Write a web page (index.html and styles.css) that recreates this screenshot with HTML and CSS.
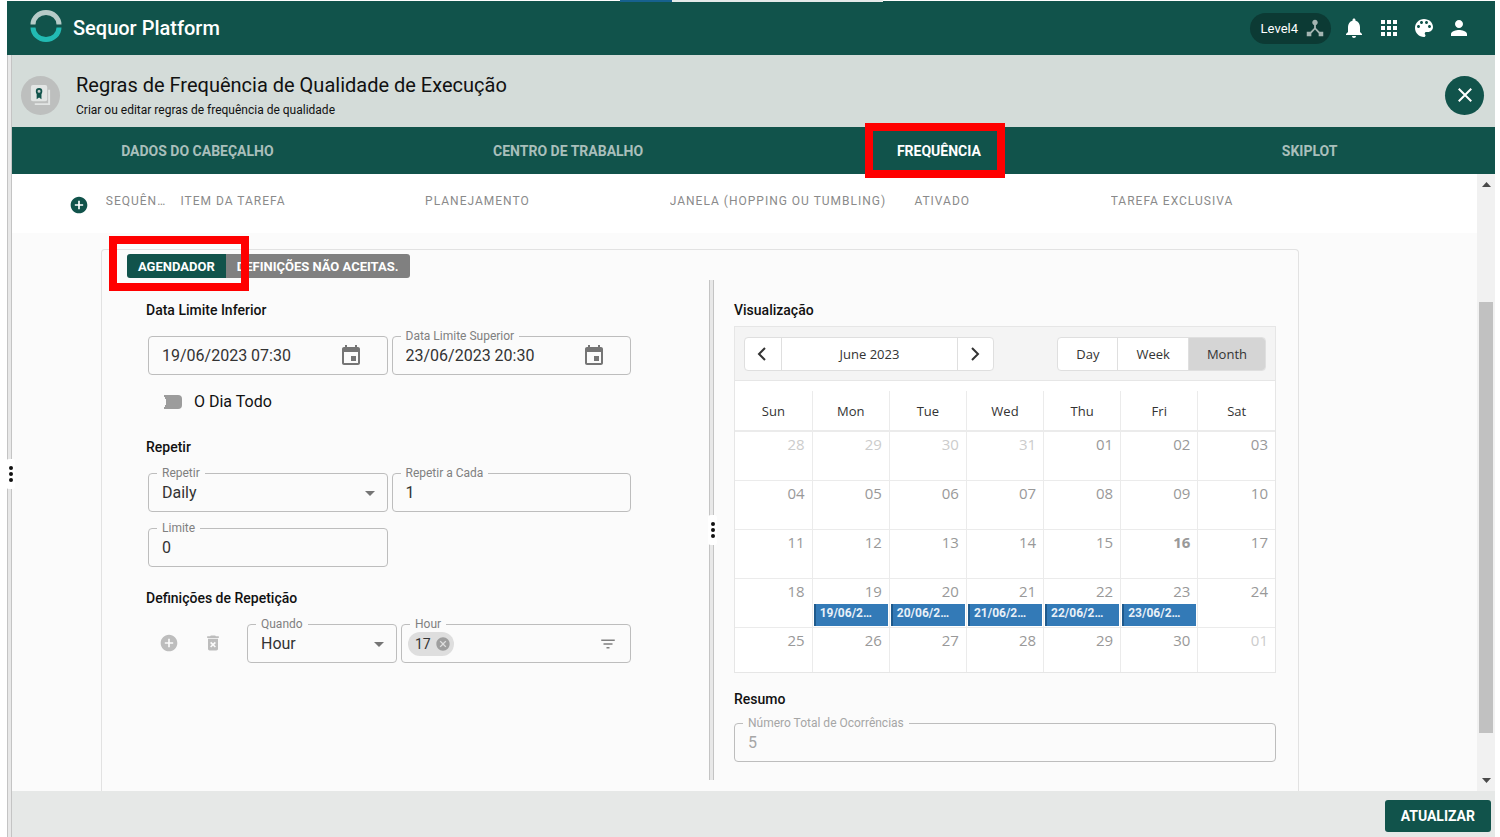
FILE: index.html
```html
<!DOCTYPE html>
<html lang="pt-BR">
<head>
  <meta charset="UTF-8" />
  <meta name="viewport" content="width=device-width, initial-scale=1.0" />
  <title>Sequor Platform – Regras de Frequência</title>
  <link rel="stylesheet" href="styles.css">
</head>
<body>
  <div class="top-strip"></div>

  <header class="app-bar">
    <svg class="logo" viewBox="0 0 32 32" aria-hidden="true">
      <path d="M3 14.5a13 12 0 0 1 26 0" fill="none" stroke="#b7cbc8" stroke-width="5"/>
      <path d="M3 17.5a13 12 0 0 0 26 0" fill="none" stroke="#22bab3" stroke-width="5"/>
    </svg>
    <span class="brand">Sequor Platform</span>
    <button class="level-button">Level4
      <svg viewBox="0 0 24 24"><path d="M17 16l-4-4V8.82C14.16 8.4 15 7.3 15 6c0-1.66-1.34-3-3-3S9 4.34 9 6c0 1.3.84 2.4 2 2.82V12l-4 4H3v5h5v-3.05l4-4.2 4 4.2V21h5v-5h-4z"/></svg>
    </button>
    <button class="icon-button" aria-label="Notificações">
      <svg viewBox="0 0 24 24"><path d="M12 22c1.1 0 2-.9 2-2h-4c0 1.1.89 2 2 2zm6-6v-5c0-3.07-1.64-5.64-4.5-6.32V4c0-.83-.67-1.5-1.5-1.5s-1.5.67-1.5 1.5v.68C7.63 5.36 6 7.92 6 11v5l-2 2v1h16v-1l-2-2z"/></svg>
    </button>
    <button class="icon-button" aria-label="Aplicativos">
      <svg viewBox="0 0 24 24"><path d="M4 8h4V4H4v4zm6 12h4v-4h-4v4zm-6 0h4v-4H4v4zm0-6h4v-4H4v4zm6 0h4v-4h-4v4zm6-10v4h4V4h-4zm-6 4h4V4h-4v4zm6 6h4v-4h-4v4zm0 6h4v-4h-4v4z"/></svg>
    </button>
    <button class="icon-button" aria-label="Tema">
      <svg viewBox="0 0 24 24"><path d="M12 3c-4.97 0-9 4.03-9 9s4.03 9 9 9c.83 0 1.5-.67 1.5-1.5 0-.39-.15-.74-.39-1.01-.23-.26-.38-.61-.38-.99 0-.83.67-1.5 1.5-1.5H16c2.76 0 5-2.24 5-5 0-4.42-4.03-8-9-8zm-5.5 9c-.83 0-1.5-.67-1.5-1.5S5.67 9 6.5 9 8 9.67 8 10.5 7.33 12 6.5 12zm3-4C8.67 8 8 7.33 8 6.5S8.67 5 9.5 5s1.5.67 1.5 1.5S10.330 8 9.5 8zm5 0c-.83 0-1.5-.67-1.5-1.5S13.670 5 14.5 5s1.5.67 1.5 1.5S15.330 8 14.5 8zm3 4c-.83 0-1.5-.67-1.5-1.5S16.670 9 17.5 9s1.5.67 1.5 1.5-.67 1.5-1.5 1.5z"/></svg>
    </button>
    <button class="icon-button" aria-label="Usuário">
      <svg viewBox="0 0 24 24"><path d="M12 12c2.21 0 4-1.79 4-4s-1.79-4-4-4-4 1.79-4 4 1.79 4 4 4zm0 2c-2.67 0-8 1.34-8 4v2h16v-2c0-2.66-5.33-4-8-4z"/></svg>
    </button>
  </header>

  <div class="workspace">
    <div class="splitter side-splitter"><span class="handle"><i></i><i></i><i></i></span></div>

    <main class="page">
      <div class="page-title">
        <span class="page-icon">
          <svg viewBox="0 0 24 24" aria-hidden="true">
            <path d="M21 6v15H6" fill="none" stroke="#e2e5e4" stroke-width="2"/>
            <rect x="2" y="1" width="17" height="17" rx="2" fill="#e2e5e4"/>
            <path d="M8 9h5v7l-2.500-2-2.500 2z" fill="#11534b"/>
            <circle cx="10.500" cy="7.500" r="2.500" fill="#c4c9c8" stroke="#11534b" stroke-width="1.800"/>
          </svg>
        </span>
        <div class="page-heading">
          <h1>Regras de Frequência de Qualidade de Execução</h1>
          <p>Criar ou editar regras de frequência de qualidade</p>
        </div>
        <button class="close-button" aria-label="Fechar">
          <svg viewBox="0 0 24 24"><path d="M4.500 4.500l15 15M19.500 4.500l-15 15" fill="none" stroke="#fff" stroke-width="2.400"/></svg>
        </button>
      </div>

      <nav class="tabs">
        <a href="#cabecalho">DADOS DO CABEÇALHO</a>
        <a href="#centro">CENTRO DE TRABALHO</a>
        <a href="#frequencia" class="active">FREQUÊNCIA<span class="marker tab-marker"></span></a>
        <a href="#skiplot">SKIPLOT</a>
      </nav>

      <div class="body-row">
        <div class="content">
          <table class="rules">
            <colgroup>
              <col class="col-add"><col class="col-seq"><col class="col-wide"><col class="col-wide"><col class="col-wide"><col class="col-active"><col>
            </colgroup>
            <thead>
              <tr>
                <th class="add-cell">
                  <button class="add-button" aria-label="Adicionar">
                    <svg viewBox="0 0 24 24"><path d="M12 2C6.48 2 2 6.48 2 12s4.48 10 10 10 10-4.480 10-10S17.520 2 12 2zm5 11h-4v4h-2v-4H7v-2h4V7h2v4h4v2z"/></svg>
                  </button>
                </th>
                <th>SEQUÊNCIA</th>
                <th>ITEM DA TAREFA</th>
                <th>PLANEJAMENTO</th>
                <th>JANELA (HOPPING OU TUMBLING)</th>
                <th>ATIVADO</th>
                <th>TAREFA EXCLUSIVA</th>
              </tr>
            </thead>
          </table>

          <div class="detail">
            <section class="panel">
              <div class="mode-buttons">
                <button class="selected">AGENDADOR<span class="marker mode-marker"></span></button>
                <button>DEFINIÇÕES NÃO ACEITAS.</button>
              </div>

              <div class="split">
                <form class="schedule">
                  <h2><label for="start">Data Limite Inferior</label></h2>
                  <div class="field-row">
                    <fieldset class="field">
                      <legend class="no-label"></legend>
                      <div class="control">
                        <input type="text" id="start" value="19/06/2023 07:30">
                        <svg class="date-icon" viewBox="0 0 24 24"><path d="M17 12h-5v5h5v-5zM16 1v2H8V1H6v2H5c-1.11 0-1.99.9-1.99 2L3 19c0 1.1.89 2 2 2h14c1.1 0 2-.9 2-2V5c0-1.1-.9-2-2-2h-1V1h-2zm3 18H5V8h14v11z"/></svg>
                      </div>
                    </fieldset>
                    <fieldset class="field">
                      <legend><label for="end">Data Limite Superior</label></legend>
                      <div class="control">
                        <input type="text" id="end" value="23/06/2023 20:30">
                        <svg class="date-icon" viewBox="0 0 24 24"><path d="M17 12h-5v5h5v-5zM16 1v2H8V1H6v2H5c-1.11 0-1.99.9-1.99 2L3 19c0 1.1.89 2 2 2h14c1.1 0 2-.9 2-2V5c0-1.1-.9-2-2-2h-1V1h-2zm3 18H5V8h14v11z"/></svg>
                      </div>
                    </fieldset>
                  </div>

                  <label class="all-day"><input type="checkbox" class="switch">O Dia Todo</label>

                  <h2>Repetir</h2>
                  <div class="field-row">
                    <fieldset class="field">
                      <legend><label for="repeat">Repetir</label></legend>
                      <div class="control">
                        <select id="repeat"><option>Daily</option><option>Weekly</option><option>Monthly</option></select>
                        <svg class="arrow-icon" viewBox="0 0 24 24"><path d="M7 10l5 5 5-5z"/></svg>
                      </div>
                    </fieldset>
                    <fieldset class="field">
                      <legend><label for="every">Repetir a Cada</label></legend>
                      <div class="control"><input type="text" id="every" value="1"></div>
                    </fieldset>
                    <fieldset class="field">
                      <legend><label for="limit">Limite</label></legend>
                      <div class="control"><input type="text" id="limit" value="0"></div>
                    </fieldset>
                  </div>

                  <h2>Definições de Repetição</h2>
                  <div class="definition-row">
                    <button type="button" class="row-button" aria-label="Adicionar definição">
                      <svg viewBox="0 0 24 24"><path d="M12 2C6.48 2 2 6.48 2 12s4.48 10 10 10 10-4.480 10-10S17.520 2 12 2zm5 11h-4v4h-2v-4H7v-2h4V7h2v4h4v2z"/></svg>
                    </button>
                    <button type="button" class="row-button" aria-label="Remover definição">
                      <svg viewBox="0 0 24 24"><path d="M6 19c0 1.100.9 2 2 2h8c1.100 0 2-.9 2-2V7H6v12zm2.460-7.120l1.410-1.410L12 12.590l2.120-2.120 1.410 1.410L13.410 14l2.120 2.120-1.410 1.410L12 15.410l-2.120 2.120-1.410-1.410L10.590 14l-2.130-2.120zM15.500 4l-1-1h-5l-1 1H5v2h14V4z"/></svg>
                    </button>
                    <div class="definition-fields">
                      <fieldset class="field">
                        <legend><label for="when">Quando</label></legend>
                        <div class="control">
                          <select id="when"><option>Hour</option><option>Day</option></select>
                          <svg class="arrow-icon" viewBox="0 0 24 24"><path d="M7 10l5 5 5-5z"/></svg>
                        </div>
                      </fieldset>
                      <fieldset class="field">
                        <legend><label for="hour">Hour</label></legend>
                        <div class="control">
                          <span class="chip">17
                            <button type="button" aria-label="Remover 17"><svg viewBox="0 0 24 24"><path d="M12 2C6.470 2 2 6.470 2 12s4.470 10 10 10 10-4.470 10-10S17.530 2 12 2zm5 13.590L15.590 17 12 13.410 8.410 17 7 15.590 10.590 12 7 8.410 8.410 7 12 10.590 15.590 7 17 8.410 13.410 12 17 15.590z"/></svg></button>
                          </span>
                          <input type="text" id="hour">
                          <svg class="filter-icon" viewBox="0 0 24 24"><path d="M10 18h4v-2h-4v2zM3 6v2h18V6H3zm3 7h12v-2H6v2z"/></svg>
                        </div>
                      </fieldset>
                    </div>
                  </div>
                </form>

                <div class="splitter"><span class="handle"><i></i><i></i><i></i></span></div>

                <div class="preview">
                  <h2>Visualização</h2>
                  <div class="calendar">
                    <div class="calendar-bar">
                      <div class="button-group">
                        <button class="step" aria-label="Anterior"><svg viewBox="0 0 16 16"><path d="M11 2L5 8l6 6"/></svg></button>
                        <button class="period">June 2023</button>
                        <button class="step" aria-label="Próximo"><svg viewBox="0 0 16 16"><path d="M5 2l6 6-6 6"/></svg></button>
                      </div>
                      <div class="button-group views">
                        <button>Day</button>
                        <button>Week</button>
                        <button class="current">Month</button>
                      </div>
                    </div>
                    <table class="month">
                      <thead>
                        <tr><th>Sun</th><th>Mon</th><th>Tue</th><th>Wed</th><th>Thu</th><th>Fri</th><th>Sat</th></tr>
                      </thead>
                      <tbody>
                        <tr><td class="other">28</td><td class="other">29</td><td class="other">30</td><td class="other">31</td><td>01</td><td>02</td><td>03</td></tr>
                        <tr><td>04</td><td>05</td><td>06</td><td>07</td><td>08</td><td>09</td><td>10</td></tr>
                        <tr><td>11</td><td>12</td><td>13</td><td>14</td><td>15</td><td class="today">16</td><td>17</td></tr>
                        <tr>
                          <td>18</td>
                          <td>19<div class="event">19/06/2023</div></td>
                          <td>20<div class="event">20/06/2023</div></td>
                          <td>21<div class="event">21/06/2023</div></td>
                          <td>22<div class="event">22/06/2023</div></td>
                          <td>23<div class="event">23/06/2023</div></td>
                          <td>24</td>
                        </tr>
                        <tr class="last"><td>25</td><td>26</td><td>27</td><td>28</td><td>29</td><td>30</td><td class="other">01</td></tr>
                      </tbody>
                    </table>
                  </div>

                  <h2>Resumo</h2>
                  <fieldset class="field disabled">
                    <legend><label for="total">Número Total de Ocorrências</label></legend>
                    <div class="control"><input type="text" id="total" value="5" disabled></div>
                  </fieldset>
                </div>
              </div>
            </section>
          </div>
        </div>

        <div class="scrollbar">
          <svg viewBox="0 0 9 5"><path d="M0 5l4.500-5L9 5z"/></svg>
          <div class="track"><div class="thumb"></div></div>
          <svg viewBox="0 0 9 5"><path d="M0 0l4.500 5L9 0z"/></svg>
        </div>
      </div>

      <footer class="actions">
        <button class="update-button">ATUALIZAR</button>
      </footer>
    </main>
  </div>
</body>
</html>
```

FILE: styles.css
```css
* {
  box-sizing: border-box;
}

body {
  margin: 0;
  padding: 1px 5px 0 7px;
  height: 100vh;
  display: flex;
  flex-direction: column;
  overflow: hidden;
  background: #fff;
  color: #111;
  font-family: Roboto, sans-serif;
  font-size: 14px;
}

button,
input,
select {
  font-family: inherit;
  color: inherit;
}

button {
  border: none;
  padding: 0;
  background: none;
  cursor: pointer;
}

svg {
  display: block;
  flex-shrink: 0;
  fill: currentColor;
}

h1,
h2,
p {
  margin: 0;
}

/* edge of the browser tab above the page */
.top-strip {
  position: absolute;
  top: 0;
  left: 620px;
  width: 263px;
  height: 2px;
  background: linear-gradient(90deg, #17618f 52px, #e4eae9 52px);
}

.app-bar {
  display: flex;
  align-items: center;
  gap: 11px;
  height: 54px;
  padding: 0 24px 0 23px;
  background: #11534b;
  color: #fff;
}

.logo {
  width: 32px;
  height: 32px;
  margin-bottom: 4px;
}

.brand {
  flex: 1;
  font-size: 20px;
  font-weight: 500;
}

.level-button {
  display: flex;
  align-items: center;
  gap: 6px;
  height: 31px;
  padding: 0 5px 0 11px;
  border-radius: 16px;
  background: #0c3a34;
  font-size: 13px;
}

.level-button svg {
  width: 22px;
  height: 22px;
  color: #a5b5b2;
}

.icon-button svg {
  width: 24px;
  height: 24px;
}

.workspace {
  flex: 1;
  min-height: 0;
  display: flex;
}

.splitter {
  position: relative;
  z-index: 1;
  width: 5px;
  flex-shrink: 0;
  display: flex;
  align-items: center;
  justify-content: center;
  border: solid #c4c4c4;
  border-width: 0 1px;
  background: #e8e8e8;
}

.side-splitter {
  padding-top: 56px;
}

.handle {
  flex-shrink: 0;
  display: flex;
  flex-direction: column;
  align-items: center;
  justify-content: center;
  gap: 2px;
  width: 9px;
  height: 30px;
  margin-left: 2px;
  border-radius: 3px;
  background: #fff;
}

.handle i {
  width: 4px;
  height: 4px;
  border-radius: 50%;
  background: #111;
}

.page {
  flex: 1;
  min-width: 0;
  display: flex;
  flex-direction: column;
}

.page-title {
  display: flex;
  align-items: center;
  height: 72px;
  padding: 8px 11px 0 9px;
  background: #d4dcd9;
}

.page-icon,
.close-button {
  display: flex;
  align-items: center;
  justify-content: center;
  width: 39px;
  height: 39px;
  border-radius: 50%;
}

.page-icon {
  background: #bdbfbe;
}

.page-icon svg {
  width: 23px;
  height: 23px;
}

.page-heading {
  flex: 1;
  padding: 2px 0 0 16px;
}

.page-heading h1 {
  font-size: 20px;
  font-weight: 400;
  line-height: 28px;
}

.page-heading p {
  font-size: 12px;
  line-height: 22px;
}

.close-button {
  background: #11534b;
}

.close-button svg {
  width: 20px;
  height: 20px;
}

.tabs {
  display: grid;
  grid-template-columns: repeat(4, 1fr);
  height: 47px;
  background: #11534b;
}

.tabs a {
  position: relative;
  display: flex;
  align-items: center;
  justify-content: center;
  color: #a9bfbb;
  font-size: 14px;
  font-weight: 700;
  text-decoration: none;
}

.tabs .active {
  color: #fff;
}

/* red frames over the current tab and mode */
.marker {
  position: absolute;
  z-index: 2;
  width: 140px;
  height: 55px;
  border: 8px solid #f00;
  pointer-events: none;
}

.tab-marker {
  top: -4px;
  left: calc(50% - 74px);
}

.mode-marker {
  top: -18px;
  left: -18px;
}

.body-row {
  flex: 1;
  min-height: 0;
  display: flex;
}

.content {
  flex: 1;
  min-width: 0;
  display: flex;
  flex-direction: column;
}

.rules {
  width: 100%;
  table-layout: fixed;
  border-collapse: collapse;
}

.col-add {
  width: 6.4%;
}

.col-seq {
  width: 5.1%;
}

.col-wide {
  width: 16.7%;
}

.col-active {
  width: 13.4%;
}

.rules th {
  height: 59px;
  padding: 0 14px 5px 0;
  overflow: hidden;
  color: #8a8a8a;
  font-size: 12px;
  font-weight: 400;
  letter-spacing: 1px;
  text-align: left;
  text-overflow: ellipsis;
  white-space: nowrap;
}

.rules .add-cell {
  padding: 3px 0 0 57px;
}

.add-button {
  display: block;
  color: #11534b;
}

.add-button svg {
  width: 20px;
  height: 20px;
}

.detail {
  flex: 1;
  min-height: 0;
  display: flex;
  padding: 16px 178px 0 89px;
  background: #fbfbfb;
}

.panel {
  flex: 1;
  min-width: 0;
  display: flex;
  flex-direction: column;
  padding-top: 4px;
  border: 1px solid #e2e2e2;
  border-bottom: none;
  border-radius: 4px 4px 0 0;
}

.mode-buttons {
  display: flex;
  padding-left: 25px;
}

.mode-buttons button {
  position: relative;
  height: 24px;
  padding: 0 11px;
  border-radius: 0 3px 3px 0;
  background: #808080;
  color: #fff;
  font-size: 13px;
  font-weight: 700;
}

.mode-buttons .selected {
  z-index: 1;
  border-radius: 3px 0 0 3px;
  background: #11534b;
}

.split {
  flex: 1;
  min-height: 0;
  display: grid;
  grid-template-columns: 607fr 5px 584fr;
  margin: 2px 0 11px;
}

.schedule {
  min-width: 0;
  padding: 20px 78px 0 44px;
}

.preview {
  min-width: 0;
  padding: 20px 22px 0 20px;
}

h2 {
  font-size: 14px;
  font-weight: 500;
  line-height: 20px;
}

.field-row {
  display: grid;
  grid-template-columns: 1fr 1fr;
  gap: 10px 4px;
  margin: 10px 0 0 2px;
}

.field {
  min-width: 0;
  height: 45px;
  margin: 0;
  padding: 0;
  border: 1px solid #bdbdbd;
  border-radius: 4px;
}

.field legend {
  margin-left: 8px;
  padding: 0 5px;
  height: 12px;
  color: #808080;
  font-size: 12px;
  line-height: 12px;
}

.field .no-label {
  padding: 0;
}

.control {
  display: flex;
  align-items: center;
  height: 27px;
}

.control input,
.control select {
  flex: 1;
  min-width: 0;
  height: 27px;
  padding: 0 0 0 13px;
  border: none;
  outline: none;
  background: none;
  appearance: none;
  color: #333;
  font-size: 16px;
}

.date-icon {
  width: 24px;
  height: 24px;
  margin-right: 24px;
  color: #757575;
}

.arrow-icon {
  width: 24px;
  height: 24px;
  margin-right: 5px;
  color: #757575;
}

.filter-icon {
  width: 18px;
  height: 18px;
  margin-right: 13px;
  color: #808080;
}

.all-day {
  display: flex;
  align-items: center;
  gap: 12px;
  margin: 17px 0 25px 2px;
  font-size: 16px;
  line-height: 20px;
}

/* the knob has the colour of the page, so only the track shows */
.switch {
  width: 34px;
  height: 14px;
  margin: 0;
  border-radius: 4px;
  appearance: none;
  background:
    linear-gradient(90deg, #fbfbfb 10px, transparent 10px),
    radial-gradient(circle at 8px 50%, #fbfbfb 10px, #9c9c9c 10px);
}

.field-row + h2 {
  margin-top: 21px;
}

.definition-row {
  display: flex;
  align-items: center;
  gap: 24px;
  margin: 10px 0 0 13px;
}

.row-button {
  margin-top: 4px;
  color: #bdbdbd;
}

.row-button svg {
  width: 20px;
  height: 20px;
}

.definition-fields {
  flex: 1;
  min-width: 0;
  display: grid;
  grid-template-columns: 150fr 230fr;
  gap: 4px;
}

.chip {
  display: flex;
  align-items: center;
  gap: 4px;
  height: 24px;
  margin-left: 6px;
  padding: 0 3px 0 7px;
  border-radius: 12px;
  background: #dedede;
  color: #333;
  font-size: 14px;
}

.chip svg {
  width: 16px;
  height: 16px;
  color: #9e9e9e;
}

.calendar {
  margin: 6px 0 16px;
  border: 1px solid #e6e6e6;
  background: #fff;
  color: #333;
  font-family: "Open Sans", "Noto Sans", sans-serif;
}

.calendar-bar {
  display: flex;
  justify-content: space-between;
  margin-bottom: 10px;
  padding: 10px 9px 9px;
  border-bottom: 1px solid #e6e6e6;
  background: #f4f4f4;
}

.button-group {
  display: flex;
  height: 34px;
  border: 1px solid #dfdfdf;
  border-radius: 4px;
  background: #fff;
  overflow: hidden;
}

.button-group button {
  font-size: 13px;
}

.button-group button + button {
  border-left: 1px solid #dfdfdf;
}

.button-group .step {
  width: 36px;
  padding: 0 9px;
}

.button-group .period {
  width: 176px;
}

.step svg {
  width: 16px;
  height: 16px;
  fill: none;
  stroke: #333;
  stroke-width: 2;
}

.views button {
  padding: 0 18px;
}

.button-group .current {
  background: #d5d5d5;
}

.month {
  width: 100%;
  table-layout: fixed;
  border-collapse: collapse;
}

.month th {
  height: 40px;
  padding: 0;
  border-bottom: 2px solid #ebebeb;
  font-size: 13px;
  font-weight: 400;
}

.month th + th,
.month td + td {
  border-left: 1px solid #ebebeb;
}

.month td {
  height: 49px;
  padding: 2px 7px 0 0;
  border-bottom: 1px solid #ebebeb;
  color: #999;
  font-size: 15px;
  line-height: 20px;
  text-align: right;
  vertical-align: top;
}

.month .last td {
  height: 45px;
  border-bottom: none;
}

.month .other {
  color: #ccc;
}

.month .today {
  font-weight: 700;
}

.event {
  height: 22px;
  margin: 3px -6px 0 1px;
  padding: 0 10px 0 4px;
  border-left: 2px solid #1f5a8c;
  background: #337ab7;
  color: #e8f0f7;
  font-family: Roboto, sans-serif;
  font-size: 12px;
  font-weight: 700;
  line-height: 18px;
  text-align: left;
  overflow: hidden;
  text-overflow: ellipsis;
  white-space: nowrap;
}

.preview .field {
  margin-top: 8px;
}

.disabled legend,
.disabled .control input {
  color: #a6a6a6;
}

.scrollbar {
  width: 18px;
  display: flex;
  flex-direction: column;
  align-items: center;
  justify-content: space-between;
  padding: 8px 0;
  background: #f1f1f1;
  color: #4a4a4a;
}

.scrollbar svg {
  width: 9px;
  height: 5px;
}

.track {
  flex: 1;
  width: 14px;
  display: flex;
  flex-direction: column;
  justify-content: flex-end;
  padding-bottom: 45px;
}

.thumb {
  height: 79%;
  background: #c1c1c1;
}

.actions {
  display: flex;
  align-items: center;
  justify-content: flex-end;
  height: 46px;
  padding: 4px 4px 0;
  background: #e6e8e7;
}

.update-button {
  height: 32px;
  padding: 0 16px;
  border-radius: 3px;
  background: #11534b;
  color: #fff;
  font-size: 14px;
  font-weight: 700;
}
```
